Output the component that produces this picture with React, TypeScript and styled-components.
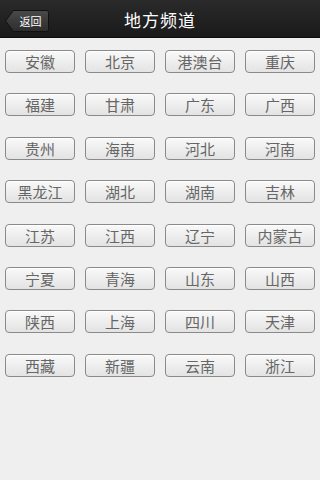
import React from "react";
import styled, { createGlobalStyle } from "styled-components";

const GlobalStyle = createGlobalStyle`
  html, body {
    margin: 0;
    padding: 0;
    background: #efefef;
  }
  body {
    font-family: "Noto Sans CJK SC", "Liberation Sans", sans-serif;
  }
`;

const Page = styled.div`
  width: 100%;
  height: 480px;
  background: #efefef;
  overflow: hidden;
`;

const Header = styled.div`
  position: relative;
  height: 37px;
  background: linear-gradient(#2a2a2a, #1a1a1a);
  border-bottom: 1px solid #0c0c0c;
  display: flex;
  align-items: center;
  justify-content: center;
`;

const Title = styled.div`
  color: #ffffff;
  font-size: 17px;
  letter-spacing: 1px;
  line-height: 1;
  margin-top: 1px;
`;

const BackButton = styled.div`
  position: absolute;
  left: 5px;
  top: 10px;
  width: 44px;
  height: 22px;
  display: flex;
  align-items: center;
  justify-content: center;
  padding-left: 7px;
  box-sizing: border-box;
  color: #ffffff;
  font-size: 11px;
  line-height: 1;

  svg {
    position: absolute;
    left: 0;
    top: 0;
  }

  span {
    position: relative;
  }
`;

const Grid = styled.div`
  display: grid;
  grid-template-columns: repeat(4, 1fr);
  column-gap: 10px;
  row-gap: 20.4px;
  padding: 12px 5px 0;
`;

const Province = styled.div`
  height: 23px;
  box-sizing: border-box;
  border: 1px solid #8a8a8a;
  border-radius: 4px;
  background: linear-gradient(#f9f9f9, #e3e3e3);
  box-shadow: inset 0 1px 0 #ffffff;
  display: flex;
  align-items: center;
  justify-content: center;
  color: #666666;
  font-size: 15px;
  line-height: 1;
`;

const provinces = [
  "安徽", "北京", "港澳台", "重庆",
  "福建", "甘肃", "广东", "广西",
  "贵州", "海南", "河北", "河南",
  "黑龙江", "湖北", "湖南", "吉林",
  "江苏", "江西", "辽宁", "内蒙古",
  "宁夏", "青海", "山东", "山西",
  "陕西", "上海", "四川", "天津",
  "西藏", "新疆", "云南", "浙江",
];

export default function App() {
  return (
    <Page>
      <GlobalStyle />
      <Header>
        <BackButton>
          <svg width="44" height="22" viewBox="0 0 44 22">
            <defs>
              <linearGradient id="bk" x1="0" y1="0" x2="0" y2="1">
                <stop offset="0" stopColor="#4a4a4a" />
                <stop offset="1" stopColor="#2c2c2c" />
              </linearGradient>
            </defs>
            <path
              d="M0.5 11 L8.5 0.5 H41.5 Q43.5 0.5 43.5 2.5 V19.5 Q43.5 21.5 41.5 21.5 H8.5 Z"
              fill="url(#bk)"
              stroke="#111"
              strokeWidth="1"
            />
          </svg>
          <span>返回</span>
        </BackButton>
        <Title>地方频道</Title>
      </Header>
      <Grid>
        {provinces.map((p) => (
          <Province key={p}>{p}</Province>
        ))}
      </Grid>
    </Page>
  );
}
